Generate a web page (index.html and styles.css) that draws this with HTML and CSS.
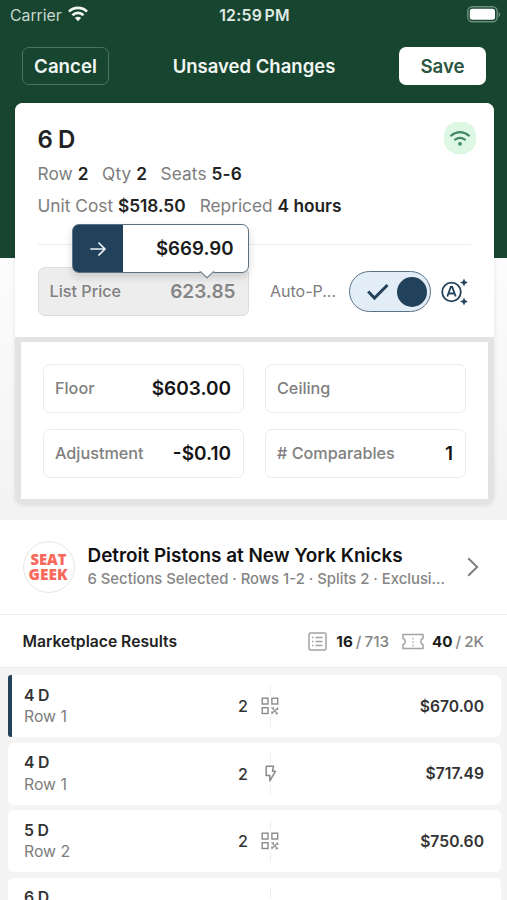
FILE: index.html
```
<!DOCTYPE html>
<html lang="en">
<head>
<meta charset="utf-8">
<title>Unsaved Changes</title>
<link rel="stylesheet" href="styles.css">
</head>
<body>
<svg class="defs" width="0" height="0">
  <symbol id="qr" viewBox="0 0 18 18">
    <g fill="none" stroke="#8a8a8a" stroke-width="1.4"><rect x="1.2" y="1.2" width="5.8" height="5.8"/><rect x="10.9" y="1.2" width="5.8" height="5.8"/><rect x="1.2" y="10.7" width="5.8" height="5.8"/></g>
    <path d="M10.500 10.500l6.500 6.500M17 10.500l-6.500 6.500M12.400 10v2.200M15.200 15.200v2.200M10 15.200h2.200M15.200 12.400h2.200" fill="none" stroke="#9a9a9a" stroke-width="1.200"/>
  </symbol>
  <symbol id="bolt" viewBox="0 0 18 18">
    <path d="M5.200 1.200h7.300l-1 5h3L8.900 15.900V10.500H5.200z" fill="none" stroke="#8a8a8a" stroke-width="1.500" stroke-linejoin="round"/>
  </symbol>
</svg>
<div class="screen">
  <header class="top">
    <div class="status">
      <div class="carrier"><span>Carrier</span>
        <svg width="20" height="16" viewBox="0 0 20 16"><g fill="none" stroke="#f1f6f3" stroke-width="2.700"><path d="M1 5.600a12.800 12.800 0 0 1 18 0"/><path d="M4.500 9.200a7.800 7.800 0 0 1 11 0"/></g><path d="M10 15.300l-3.100-3.200a4.400 4.400 0 0 1 6.200 0z" fill="#f1f6f3"/></svg>
      </div>
      <div class="time">12:59 PM</div>
      <svg class="battery" width="34" height="17" viewBox="0 0 34 17"><rect x=".8" y=".8" width="29.400" height="15" rx="4.600" fill="none" stroke="#6b8d7b" stroke-width="1.500"/><rect x="2.800" y="2.800" width="25.200" height="11" rx="2.400" fill="#fff"/><path d="M31.600 6v5q1.700-.8 1.700-2.500T31.600 6z" fill="#6b8d7b"/></svg>
    </div>
    <nav class="nav">
      <div class="btn cancel">Cancel</div>
      <h1 class="title">Unsaved Changes</h1>
      <div class="btn save">Save</div>
    </nav>
  </header>
  <section class="stage">
    <div class="card">
      <div class="summary">
        <div class="head"><h2 class="section">6 D</h2>
          <svg width="32" height="32" viewBox="0 0 32 32"><path d="M10 0h12l7 4 3 7v11l-4 6-7 4H11l-7-4-4-6V11l3-7z" fill="#dcf8e2"/><g fill="none" stroke="#43876a" stroke-width="2.100" stroke-linecap="round"><path d="M7 13.600q9-7 18 0"/><path d="M11 17.700q5-3.800 10 0"/></g><circle cx="16" cy="21.800" r="1.900" fill="#43876a"/></svg>
        </div>
        <div class="facts row1"><span>Row <b>2</b></span><span>Qty <b>2</b></span><span>Seats <b>5-6</b></span></div>
        <div class="facts row2"><span>Unit Cost <b>$518.50</b></span><span>Repriced <b>4 hours</b></span></div>
        <div class="rule"></div>
        <div class="pricing">
          <div class="field list-price"><span>List Price</span><b>623.85</b>
            <div class="tip">
              <div class="tip-arrow"><svg width="18" height="16" viewBox="0 0 18 16"><path d="M1.300 8h14.600M9.400 1.500L15.900 8l-6.500 6.500" fill="none" stroke="#e8f1f8" stroke-width="1.700"/></svg></div>
              <div class="tip-value">$669.90</div>
              <svg class="tip-tail" width="16" height="8" viewBox="0 0 16 8"><path d="M0 0h16L8 7z" fill="#fff"/><path d="M.5.9h1.300L8 6.800 14.200.9h1.300" fill="none" stroke="#7d8991" stroke-width="1.200"/></svg>
            </div>
          </div>
          <div class="auto">Auto-P...</div>
          <div class="toggle">
            <svg width="24" height="18" viewBox="0 0 24 18"><path d="M2.200 8.500l6.300 6.600L21.500 2" fill="none" stroke="#22415a" stroke-width="3"/></svg>
            <div class="knob"></div>
          </div>
          <svg class="ai" width="28" height="28" viewBox="0 0 28 28"><circle cx="10.500" cy="14" r="9.300" fill="none" stroke="#22415a" stroke-width="1.800"/><path d="M6.300 18.500l3.500-9.500h1.400l3.500 9.500M7.600 15.500h5.800" fill="none" stroke="#22415a" stroke-width="1.800"/><path d="M23 .5l1.200 2.800L27 4.500l-2.800 1.200L23 8.500l-1.200-2.800L19 4.500l2.800-1.200zM23 19.500l1.200 2.800 2.800 1.200-2.800 1.200-1.200 2.800-1.200-2.800-2.800-1.200 2.800-1.200z" fill="#22415a" stroke="#fff" stroke-width="3" paint-order="stroke"/></svg>
        </div>
      </div>
      <div class="rules">
        <div class="field"><span>Floor</span><b>$603.00</b></div>
        <div class="field"><span>Ceiling</span></div>
        <div class="field"><span>Adjustment</span><b>-$0.10</b></div>
        <div class="field"><span># Comparables</span><b>1</b></div>
      </div>
    </div>
  </section>
  <section class="event">
    <svg class="logo" width="52" height="52" viewBox="0 0 52 52"><circle cx="26" cy="26" r="25.400" fill="#fff" stroke="#e6e6e6"/><g class="logo-text"><text x="7.500" y="24" textLength="36" lengthAdjust="spacingAndGlyphs">SEAT</text><text x="5.500" y="38.500" textLength="39" lengthAdjust="spacingAndGlyphs">GEEK</text></g></svg>
    <div class="event-text"><div class="event-name">Detroit Pistons at New York Knicks</div><div class="event-sub">6 Sections Selected · Rows 1-2 · Splits 2 · Exclusi...</div></div>
    <svg class="chevron" width="12" height="20" viewBox="0 0 12 20"><path d="M1.200 1.200L10.200 10l-9 8.800" fill="none" stroke="#7d7d7d" stroke-width="1.900"/></svg>
  </section>
  <section class="market">
    <h3 class="market-title">Marketplace Results</h3>
    <svg width="19" height="19" viewBox="0 0 19 19" fill="none" stroke="#a3a3a3"><rect x="1" y="1" width="17" height="17" rx="1.500" stroke-width="1.500"/><path d="M4 5.500h1.500M7.500 5.500h7M4 9.500h1.500M7.500 9.500h7M4 13.500h1.500M7.500 13.500h7" stroke-width="1.300"/></svg>
    <div class="count c1"><b>16</b> / 713</div>
    <svg width="22" height="17" viewBox="0 0 22 17" fill="none" stroke="#a3a3a3"><path d="M1 1.500h20v3.800q-2.200 1-2.200 3.200t2.200 3.200v3.800H1v-3.800q2.200-1 2.200-3.200T1 5.300z" stroke-width="1.500"/><path d="M11 4.500v9" stroke-dasharray="2 1.500"/></svg>
    <div class="count c2"><b>40</b> / 2K</div>
  </section>
  <section class="results">
    <div class="result current"><div class="seat"><b>4 D</b><span>Row 1</span></div><div class="qty">2</div><div class="kind"><svg width="18" height="18"><use href="#qr"/></svg></div><div class="price">$670.00</div></div>
    <div class="result"><div class="seat"><b>4 D</b><span>Row 1</span></div><div class="qty">2</div><div class="kind"><svg width="18" height="18"><use href="#bolt"/></svg></div><div class="price">$717.49</div></div>
    <div class="result"><div class="seat"><b>5 D</b><span>Row 2</span></div><div class="qty">2</div><div class="kind"><svg width="18" height="18"><use href="#qr"/></svg></div><div class="price">$750.60</div></div>
    <div class="result"><div class="seat"><b>6 D</b></div><div class="qty"></div><div class="kind"><svg width="18" height="18"><use href="#qr"/></svg></div><div class="price"></div></div>
  </section>
</div>
</body>
</html>
```
FILE: styles.css
```
* { box-sizing: border-box; }
body { margin: 0; font-family: Inter, "Liberation Sans", sans-serif; color: #222; }
h1, h2, h3 { margin: 0; }
b { font-weight: 600; }
.defs { display: block; }
svg { display: block; flex: none; }
.screen { width: 507px; height: 900px; overflow: hidden; background: #f4f4f4; }

.top { height: 103px; background: #17452f; color: #f1f6f3; }
.status { height: 30px; padding: 0 6px 0 10px; display: grid; grid-template-columns: 1fr auto 1fr; align-items: center; }
.carrier { display: flex; align-items: center; gap: 6px; font-size: 15.800px; color: #c9d8d0; }
.carrier svg { margin-top: -2px; }
.time { font-size: 15.800px; font-weight: 600; letter-spacing: .3px; word-spacing: -2px; padding-right: 2px; color: #e0eae4; }
.battery { justify-self: end; margin-top: -2px; }
.nav { display: grid; grid-template-columns: 87px 1fr 87px; align-items: center; padding: 17px 21px 0 22px; }
.btn { height: 38px; border-radius: 7px; font-size: 18.700px; font-weight: 600; display: flex; align-items: center; justify-content: center; }
.cancel { border: 1.500px solid #4b7460; }
.save { background: #fff; color: #2a5541; }
.title { font-size: 18.500px; font-weight: 600; text-align: center; }

.stage { height: 417px; padding: 0 13px 0 15px; background: linear-gradient(#17452f 155px, #fcfcfc 155px, #f3f3f3); }
.card { height: 401px; border-radius: 8px; background: #e3e3e3; box-shadow: 0 1px 4px rgba(0,0,0,.1); display: flex; flex-direction: column; }
.summary { height: 234px; padding: 19px 23px 0 22.500px; background: #fff; border-radius: 8px 8px 0 0; }
.head { display: flex; align-items: center; justify-content: space-between; height: 36px; margin-right: -5px; }
.head svg { margin-top: -5px; }
.section { font-size: 24px; font-weight: 600; line-height: 36px; letter-spacing: -.5px; }
.facts { display: flex; font-size: 17.300px; line-height: 32px; color: #7d7d7d; }
.facts b { color: #222; }
.row1 { gap: 13.500px; letter-spacing: .08px; }
.row2 { gap: 14px; }
.rule { height: 1px; margin: 22px 0; background: #ececec; }
.pricing { display: flex; align-items: center; }
.field { height: 49px; border: 1.500px solid #ebebeb; border-radius: 7px; padding: 0 12px 0 11px; display: flex; align-items: center; justify-content: space-between; font-size: 16.200px; font-weight: 450; color: #808080; }
.field > span { margin-top: -1px; }
.field b { font-size: 19px; color: #151515; }
.list-price { position: relative; width: 211px; background: #ededed; border-color: #dcdcdc; }
.list-price b { color: #858585; }
.tip { position: absolute; left: 33px; top: -44px; width: 177px; height: 49px; display: flex; background: #fff; border: 1.500px solid #5b7284; border-radius: 7px; box-shadow: 0 4px 8px rgba(0,0,0,.15); }
.tip-arrow { width: 50px; background: #22415a; border-radius: 5px 0 0 5px; display: flex; align-items: center; justify-content: center; }
.tip-value { flex: 1; padding-right: 14px; text-align: right; line-height: 47px; font-size: 18.700px; font-weight: 600; color: #1b1b1b; }
.tip-tail { position: absolute; right: 33px; top: 46px; }
.auto { width: 79px; padding-left: 21.500px; margin-top: -1px; white-space: nowrap; font-size: 16px; color: #7d7d7d; }
.toggle { width: 82px; height: 41px; margin-left: 21px; border: 1.500px solid #5b7284; border-radius: 21px; background: #e3edf8; display: flex; align-items: center; justify-content: space-between; padding: 0 3px 0 16px; }
.knob { width: 30px; height: 30px; border-radius: 50%; background: #22415a; }
.ai { margin-left: 10px; }
.rules { margin: 5px 6px 5px; height: 157px; padding: 22px; background: #fff; display: grid; grid-template-columns: 201px 201px; grid-template-rows: 49px 49px; gap: 16px 21px; }

.event { height: 95px; padding: 0 28px 0 22.500px; background: #fff; border-bottom: 1.500px solid #ebebeb; display: flex; align-items: center; }
.event-text { flex: 1; margin-left: 13px; white-space: nowrap; }
.event-name { font-size: 18.900px; line-height: 24px; font-weight: 600; color: #111; }
.event-sub { font-size: 14.830px; line-height: 22px; font-weight: 450; color: #858585; }
.logo-text { fill: #f8695c; font: 800 16.500px "Open Sans", sans-serif; }
.market { height: 53px; padding: 0 23px 0 22.500px; background: #fff; border-bottom: 1.500px solid #ebebeb; display: flex; align-items: center; }
.market-title { flex: 1; font-size: 15.700px; font-weight: 600; }
.count { font-size: 15.200px; font-weight: 450; word-spacing: -1px; color: #858585; white-space: nowrap; }
.count b { color: #1b1b1b; font-weight: 700; }
.c1 { margin: 0 13px 0 9.500px; }
.c2 { margin-left: 8px; }
.results { padding: 7px 6px 0 8px; display: flex; flex-direction: column; gap: 5.600px; }
.result { height: 62px; flex: none; padding: 0 17px 0 16px; border-radius: 6px; background: #fff; display: grid; grid-template-columns: 213px 24px 1fr auto; align-items: center; }
.current { border-left: 4px solid #22415a; padding-left: 12px; border-radius: 3px 6px 6px 3px; }
.seat { display: flex; flex-direction: column; align-self: start; padding-top: 9.500px; font-size: 15.800px; line-height: 21.700px; color: #7d7d7d; }
.seat b { color: #333; letter-spacing: -.2px; }
.qty { font-size: 16px; font-weight: 500; color: #333; padding-left: 1px; }
.kind { width: 18px; height: 42px; display: flex; flex-direction: column; align-items: center; justify-content: space-between; }
.kind::before, .kind::after { content: ""; height: 10px; border-left: 1px dashed #ececec; }
.price { font-size: 15.700px; font-weight: 600; color: #333; }
```
